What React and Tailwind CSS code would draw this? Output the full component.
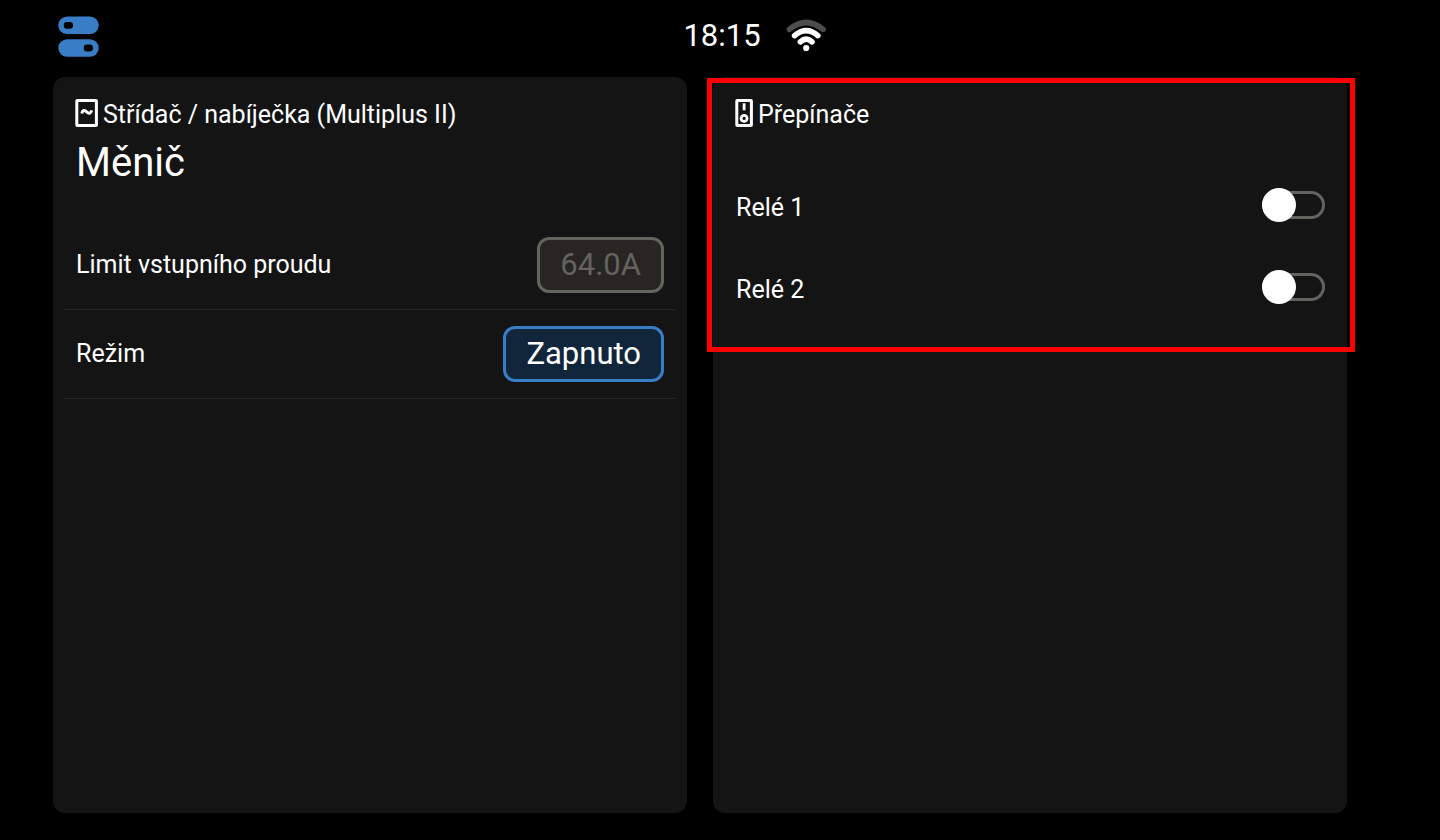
import React, { useState } from "react";

const SwitchesIcon = () => (
  <svg viewBox="0 0 41 41" className="size-[41px]" aria-hidden="true">
    <rect x="0.3" y="0.5" width="40.4" height="17.6" rx="8.8" fill="#387dc5" />
    <rect x="0.3" y="23.2" width="40.4" height="17.6" rx="8.8" fill="#387dc5" />
    <rect x="5.8" y="6" width="9.2" height="6.8" rx="3.2" fill="#000" />
    <rect x="25.8" y="28.6" width="9.2" height="6.8" rx="3.2" fill="#000" />
  </svg>
);

const WifiIcon = () => (
  <svg
    viewBox="0 -2 40 38"
    className="h-[38px] w-10"
    fill="none"
    strokeWidth="5.6"
    strokeLinecap="round"
    role="img"
    aria-label="Wi-Fi"
  >
    <path d="M3.4 11.4 Q20.2 -2.4 37 11.4" stroke="#4d4d4d" />
    <path d="M8.6 17.6 Q20.2 7.6 31.8 17.6" stroke="#fff" />
    <path d="M14.4 23.8 Q20.2 18.6 26 23.8" stroke="#fff" />
    <circle cx="20.2" cy="30" r="3.1" fill="#fff" />
  </svg>
);

const InverterIcon = () => (
  <svg viewBox="0 0 23 28" className="h-7 w-[23px]" fill="none" stroke="#fff" aria-hidden="true">
    <rect x="1.8" y="1.5" width="19.6" height="25" rx="0.5" strokeWidth="3" />
    <path
      d="M6.8 14.6 C7.4 11.2 9.4 10.4 11.6 12.8 C13.8 15.2 15.8 14.8 16.6 11.4"
      strokeWidth="3"
    />
  </svg>
);

const RelayIcon = () => (
  <svg viewBox="0 0 18 28" className="h-7 w-[18px]" fill="none" stroke="#fff" aria-hidden="true">
    <rect x="1.8" y="1.5" width="14.6" height="25" rx="0.5" strokeWidth="3" />
    <path d="M9.1 4.3 V11.3" strokeWidth="2.8" />
    <circle cx="9.1" cy="19.4" r="3" strokeWidth="2.8" />
  </svg>
);

const CardTitle = ({ icon, children }) => (
  <div className="flex items-start gap-[5px] px-[11px]">
    {icon}
    <h2 className="leading-8">{children}</h2>
  </div>
);

const SettingRow = ({ id, label, value, disabled }) => (
  <div className="flex items-center justify-between border-b border-[#272622] px-3 py-4">
    <span id={id} className="leading-8">
      {label}
    </span>
    <button
      aria-describedby={id}
      disabled={disabled}
      className="h-14 rounded-xl border-3 border-[#387dc5] bg-[#11263b] px-5 text-[31px] leading-[48px] disabled:border-[#64635f] disabled:bg-[#272622] disabled:text-[#64635f]"
    >
      {value}
    </button>
  </div>
);

const RelayRow = ({ id, label }) => {
  const [on, setOn] = useState(false);

  return (
    <div className="flex items-end justify-between py-6 pl-3 pr-[11px]">
      <label htmlFor={id} className="leading-7">
        {label}
      </label>
      <input
        id={id}
        type="checkbox"
        role="switch"
        checked={on}
        onChange={(e) => setOn(e.target.checked)}
        className="relative h-[34px] w-[63px] appearance-none before:absolute before:inset-x-0 before:inset-y-[3px] before:rounded-full before:border-3 before:border-[#64635f] after:absolute after:left-0 after:size-[34px] after:rounded-full after:bg-white checked:before:border-[#387dc5] checked:before:bg-[#387dc5] checked:after:left-auto checked:after:right-0"
      />
    </div>
  );
};

const App = () => {
  return (
    <div className="flex min-h-screen flex-col bg-black pb-[27px] pl-[53px] pr-[93px] font-['Roboto',sans-serif] text-[25px] text-white">
      {/* Status bar, centred on the window and not on the cards */}
      <header className="-mr-11 grid grid-cols-[1fr_auto_1fr] items-start pb-5 pt-4">
        <button aria-label="Ovládání" className="ml-[5px] justify-self-start">
          <SwitchesIcon />
        </button>
        <time className="text-[31px] leading-10">18:15</time>
        <div className="pl-[25px]">
          <WifiIcon />
        </div>
      </header>

      <main className="grid flex-1 grid-cols-2 gap-[26px]">
        <section className="rounded-xl bg-[#141414] px-[11px] pt-[22px]">
          <CardTitle icon={<InverterIcon />}>
            Střídač / nabíječka (Multiplus II)
          </CardTitle>
          <p className="mt-2 px-3 text-[40px] leading-[48px]">Měnič</p>
          <div className="mt-[34px]">
            <SettingRow id="limit" label="Limit vstupního proudu" value="64.0A" disabled />
            <SettingRow id="mode" label="Režim" value="Zapnuto" />
          </div>
        </section>

        <section className="relative rounded-xl bg-[#141414] px-[11px] pt-[22px]">
          <CardTitle icon={<RelayIcon />}>Přepínače</CardTitle>
          <div className="mt-[33px]">
            <RelayRow id="relay-1" label="Relé 1" />
            <RelayRow id="relay-2" label="Relé 2" />
          </div>
          {/* Highlight */}
          <div className="pointer-events-none absolute -left-[6px] -right-2 top-px h-[274px] border-5 border-[#ff0000]" />
        </section>
      </main>
    </div>
  );
};

export default App;
